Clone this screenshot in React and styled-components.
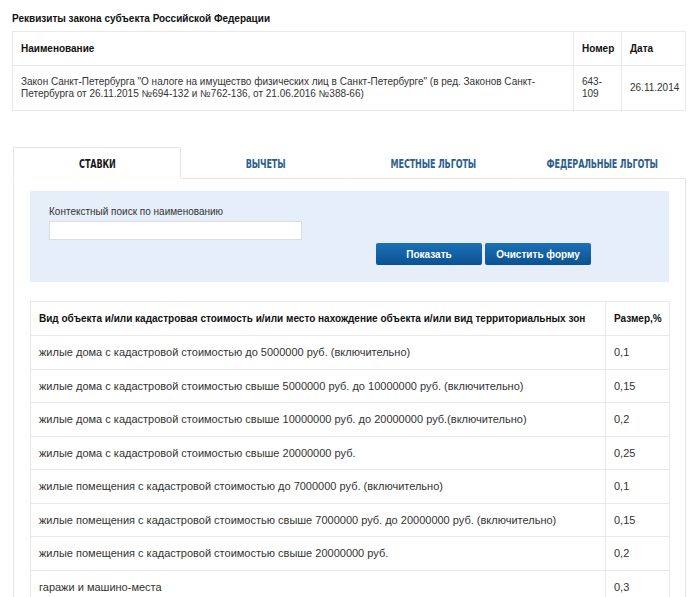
import React from "react";
import styled, { createGlobalStyle } from "styled-components";

const GlobalStyle = createGlobalStyle`
  body {
    margin: 0;
    background: #fff;
    font-family: "Liberation Sans", Arial, sans-serif;
    font-size: 11px;
    color: #333;
  }
`;

const Page = styled.div`
  width: 700px;
  padding: 13px 0 0 12px;
  box-sizing: border-box;
`;

const Title = styled.h2`
  margin: 0 0 6px;
  font-size: 10px;
  line-height: 12px;
  font-weight: bold;
  color: #111;
`;

const LawTable = styled.table`
  width: 674px;
  border-collapse: collapse;
  table-layout: fixed;
  margin-bottom: 36px;
  font-size: 10px;
`;

const Th = styled.th`
  box-sizing: border-box;
  text-align: left;
  font-size: 10px;
  font-weight: bold;
  color: #111;
  padding: 0 8px;
  height: ${(p) => p.$h || 33}px;
  border: 1px solid #e8e8e8;
  width: ${(p) => (p.$w ? `${p.$w}px` : "auto")};
`;

const Td = styled.td`
  box-sizing: border-box;
  padding: 0 8px;
  height: ${(p) => p.$h || 33}px;
  border: 1px solid #e8e8e8;
  line-height: 12px;
  vertical-align: middle;
`;

const Tabs = styled.div`
  display: flex;
  width: 673px;
  margin-left: 1px;
`;

const Tab = styled.div`
  flex: 1;
  height: 32px;
  display: flex;
  align-items: center;
  justify-content: center;
  box-sizing: border-box;
  padding-top: 1px;
  background: #fff;
  border: 1px solid ${(p) => (p.$active ? "#e6e6e6" : "transparent")};
  border-bottom: 1px solid ${(p) => (p.$active ? "#fff" : "#e6e6e6")};
  color: ${(p) => (p.$active ? "#1a1a1a" : "#2c5f8e")};
`;

const TabLabel = styled.span`
  display: inline-block;
  font-family: "DejaVu Sans Condensed", "DejaVu Sans", sans-serif;
  font-weight: bold;
  font-size: 12.5px;
  transform: scaleX(0.72);
  letter-spacing: -0.2px;
  white-space: nowrap;
`;

const Panel = styled.div`
  width: 673px;
  margin-left: 1px;
  box-sizing: border-box;
  border: 1px solid #e6e6e6;
  border-top: none;
  padding: 12px 16px 0;
`;

const SearchBox = styled.div`
  background: #e6eefa;
  height: 91px;
  box-sizing: border-box;
  padding: 15px 19px 0;
  margin-bottom: 19px;
`;

const Label = styled.div`
  font-size: 10px;
  line-height: 12px;
  color: #333;
  margin-bottom: 3px;
`;

const Input = styled.input`
  display: block;
  width: 253px;
  height: 19px;
  box-sizing: border-box;
  border: 1px solid #dcdcdc;
  background: #fff;
  margin: 0;
`;

const ButtonRow = styled.div`
  display: flex;
  gap: 3px;
  padding-left: 327px;
  margin-top: 3px;
`;

const Button = styled.button`
  width: ${(p) => p.$w}px;
  height: 22px;
  border: none;
  border-radius: 2px;
  background: linear-gradient(#1b70b6, #0c5292);
  color: #fff;
  font-family: "Liberation Sans", Arial, sans-serif;
  font-size: 10px;
  font-weight: bold;
  padding: 0;
`;

const RateTable = styled.table`
  width: 640px;
  border-collapse: collapse;
  table-layout: fixed;
  font-size: 11px;
`;

const law = {
  name: 'Закон Санкт-Петербурга "О налоге на имущество физических лиц в Санкт-Петербурге" (в ред. Законов Санкт-Петербурга от 26.11.2015 №694-132 и №762-136, от 21.06.2016 №388-66)',
  number: "643-109",
  date: "26.11.2014",
};

const tabs = ["СТАВКИ", "ВЫЧЕТЫ", "МЕСТНЫЕ ЛЬГОТЫ", "ФЕДЕРАЛЬНЫЕ ЛЬГОТЫ"];

const rates = [
  ["жилые дома с кадастровой стоимостью до 5000000 руб. (включительно)", "0,1"],
  ["жилые дома с кадастровой стоимостью свыше 5000000 руб. до 10000000 руб. (включительно)", "0,15"],
  ["жилые дома с кадастровой стоимостью свыше 10000000 руб. до 20000000 руб.(включительно)", "0,2"],
  ["жилые дома с кадастровой стоимостью свыше 20000000 руб.", "0,25"],
  ["жилые помещения с кадастровой стоимостью до 7000000 руб. (включительно)", "0,1"],
  ["жилые помещения с кадастровой стоимостью свыше 7000000 руб. до 20000000 руб. (включительно)", "0,15"],
  ["жилые помещения с кадастровой стоимостью свыше 20000000 руб.", "0,2"],
  ["гаражи и машино-места", "0,3"],
];

export default function App() {
  return (
    <Page>
      <GlobalStyle />
      <Title>Реквизиты закона субъекта Российской Федерации</Title>
      <LawTable>
        <thead>
          <tr>
            <Th $h={34}>Наименование</Th>
            <Th $h={34} $w={48}>Номер</Th>
            <Th $h={34} $w={64}>Дата</Th>
          </tr>
        </thead>
        <tbody>
          <tr>
            <Td $h={45}>{law.name}</Td>
            <Td $h={45}>{law.number}</Td>
            <Td $h={45}>{law.date}</Td>
          </tr>
        </tbody>
      </LawTable>

      <Tabs>
        {tabs.map((t, i) => (
          <Tab key={t} $active={i === 0}>
            <TabLabel>{t}</TabLabel>
          </Tab>
        ))}
      </Tabs>
      <Panel>
        <SearchBox>
          <Label>Контекстный поиск по наименованию</Label>
          <Input type="text" />
          <ButtonRow>
            <Button $w={106}>Показать</Button>
            <Button $w={106}>Очистить форму</Button>
          </ButtonRow>
        </SearchBox>
        <RateTable>
          <thead>
            <tr>
              <Th $h={34}>Вид объекта и/или кадастровая стоимость и/или место нахождение объекта и/или вид территориальных зон</Th>
              <Th $h={34} $w={64}>Размер,%</Th>
            </tr>
          </thead>
          <tbody>
            {rates.map(([name, value]) => (
              <tr key={name}>
                <Td $h={33.5}>{name}</Td>
                <Td $h={33.5}>{value}</Td>
              </tr>
            ))}
          </tbody>
        </RateTable>
      </Panel>
    </Page>
  );
}
